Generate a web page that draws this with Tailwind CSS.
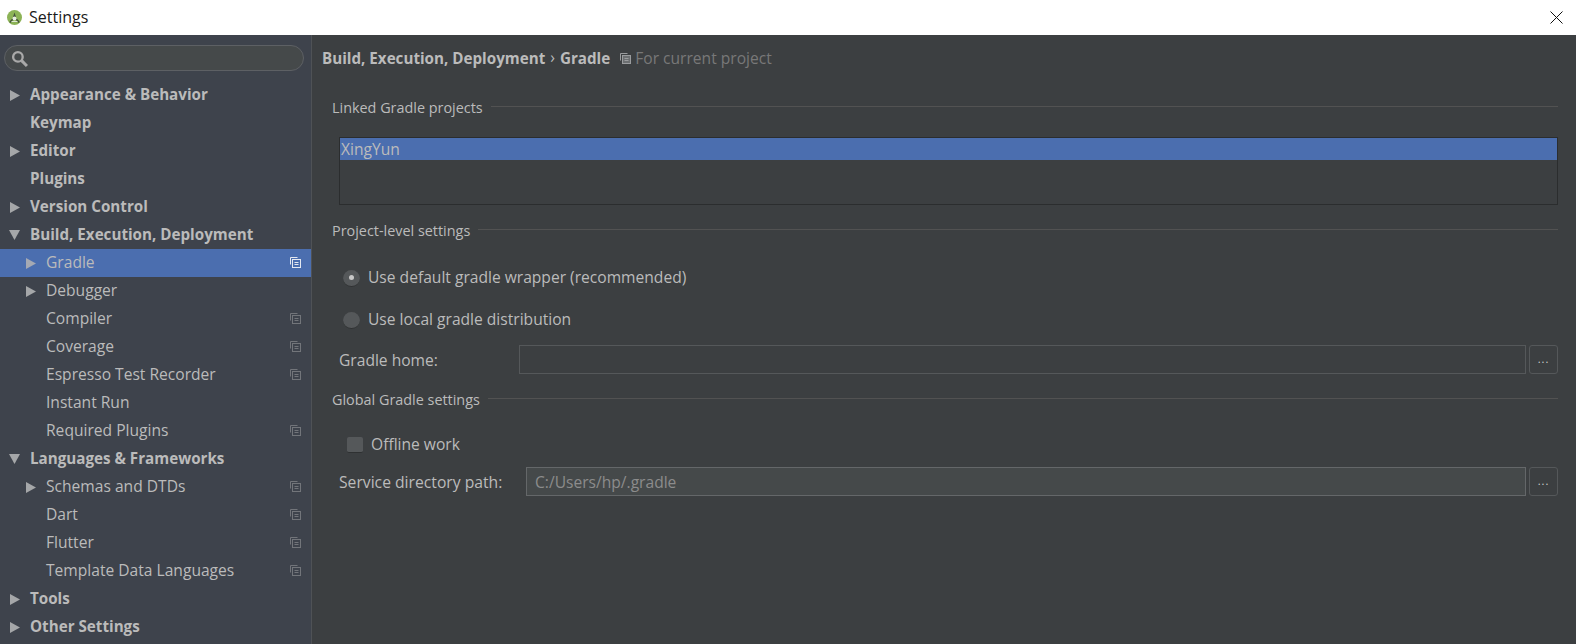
<!DOCTYPE html>
<html lang="en">
<head>
<meta charset="UTF-8">
<title>Settings</title>
<script src="https://cdn.jsdelivr.net/npm/@tailwindcss/browser@4"></script>
</head>
<body class="h-[644px] w-[1576px] overflow-hidden bg-[#3c3f41] font-['Open_Sans','Noto_Sans',sans-serif] text-[15.6px] text-[#bbbbbb]">
<!-- Title bar -->
<header class="flex h-[35px] items-center justify-between bg-white pl-[7px] pr-[13px] text-[#1a1a1a]">
  <div class="flex items-center gap-[7px]">
    <svg width="15" height="15" viewBox="0 0 15 15"><circle cx="7.5" cy="7.5" r="7.5" fill="#8cb356"/><path d="M7.500 2.500 L6 7 H9 Z" fill="#44533a"/><path d="M3 12.500 Q7.500 5 12 12.500" fill="none" stroke="#44533a" stroke-width="1.600"/><circle cx="7.500" cy="8.500" r="2" fill="#e8efe0"/><path d="M4.500 11.500 H10.500" stroke="#dfe8d2"/></svg>
    <span class="-translate-y-px text-[16px]">Settings</span>
  </div>
  <svg width="13" height="13" viewBox="0 0 13 13" stroke="#111" fill="none"><path d="M0.5 0.5 L12.5 12.5 M12.5 0.5 L0.5 12.5"/></svg>
</header>

<div class="flex h-[609px]">
  <!-- Sidebar -->
  <aside class="w-[312px] shrink-0 border-r border-r-[#4f5256] bg-[#3e434c]">
    <div class="px-[4px] pb-[10px] pt-[10px] pr-[7px]">
      <div class="flex h-[26px] items-center rounded-full border border-[#5d6064] bg-[#45494a] pl-[6px]">
        <svg width="17" height="17" viewBox="0 0 16 16" fill="none" stroke="#a9a9a9"><circle cx="6.5" cy="6.5" r="4.5" stroke-width="2.200"/><path d="M10 10 L15 15" stroke-width="2.800"/></svg>
      </div>
    </div>
    <nav id="tree">
      <div class="flex h-[28px] items-center pl-[10px]"><svg class="mr-[10px]" width="10" height="11" viewBox="0 0 10 11"><path d="M0 0 L10 5.500 L0 11 Z" fill="#a5a7a9"/></svg><span class="-translate-y-px text-[15.2px] font-bold">Appearance &amp; Behavior</span></div>
      <div class="flex h-[28px] items-center pl-[30px]"><span class="-translate-y-px text-[15.2px] font-bold">Keymap</span></div>
      <div class="flex h-[28px] items-center pl-[10px]"><svg class="mr-[10px]" width="10" height="11" viewBox="0 0 10 11"><path d="M0 0 L10 5.500 L0 11 Z" fill="#a5a7a9"/></svg><span class="-translate-y-px text-[15.2px] font-bold">Editor</span></div>
      <div class="flex h-[28px] items-center pl-[30px]"><span class="-translate-y-px text-[15.2px] font-bold">Plugins</span></div>
      <div class="flex h-[28px] items-center pl-[10px]"><svg class="mr-[10px]" width="10" height="11" viewBox="0 0 10 11"><path d="M0 0 L10 5.500 L0 11 Z" fill="#a5a7a9"/></svg><span class="-translate-y-px text-[15.2px] font-bold">Version Control</span></div>
      <div class="flex h-[28px] items-center pl-[9px]"><svg class="mr-[10px]" width="11" height="10" viewBox="0 0 11 10"><path d="M0 0 L11 0 L5.500 10 Z" fill="#a5a7a9"/></svg><span class="-translate-y-px text-[15.2px] font-bold">Build, Execution, Deployment</span></div>
      <div class="flex h-[28px] items-center bg-[#4b6eaf] pl-[26px] pr-[10px]"><svg class="mr-[10px]" width="10" height="11" viewBox="0 0 10 11"><path d="M0 0 L10 5.500 L0 11 Z" fill="#a5a9b3"/></svg><span>Gradle</span><svg class="ml-auto -translate-y-px" width="11" height="11" viewBox="0 0 11 11" fill="none" stroke="#e4e8f0"><path d="M7.500 0.500 H0.500 V7.500"/><rect x="2.500" y="2.500" width="8" height="8"/><path d="M4.500 5.500 H8.500 M4.500 7.500 H8.500"/></svg></div>
      <div class="flex h-[28px] items-center pl-[26px]"><svg class="mr-[10px]" width="10" height="11" viewBox="0 0 10 11"><path d="M0 0 L10 5.500 L0 11 Z" fill="#a5a7a9"/></svg><span>Debugger</span></div>
      <div class="flex h-[28px] items-center pl-[46px] pr-[10px]"><span>Compiler</span><svg class="ml-auto -translate-y-px" width="11" height="11" viewBox="0 0 11 11" fill="none" stroke="#72757a"><path d="M7.500 0.500 H0.500 V7.500"/><rect x="2.500" y="2.500" width="8" height="8"/><path d="M4.500 5.500 H8.500 M4.500 7.500 H8.500"/></svg></div>
      <div class="flex h-[28px] items-center pl-[46px] pr-[10px]"><span>Coverage</span><svg class="ml-auto -translate-y-px" width="11" height="11" viewBox="0 0 11 11" fill="none" stroke="#72757a"><path d="M7.500 0.500 H0.500 V7.500"/><rect x="2.500" y="2.500" width="8" height="8"/><path d="M4.500 5.500 H8.500 M4.500 7.500 H8.500"/></svg></div>
      <div class="flex h-[28px] items-center pl-[46px] pr-[10px]"><span>Espresso Test Recorder</span><svg class="ml-auto -translate-y-px" width="11" height="11" viewBox="0 0 11 11" fill="none" stroke="#72757a"><path d="M7.500 0.500 H0.500 V7.500"/><rect x="2.500" y="2.500" width="8" height="8"/><path d="M4.500 5.500 H8.500 M4.500 7.500 H8.500"/></svg></div>
      <div class="flex h-[28px] items-center pl-[46px] pr-[10px]"><span>Instant Run</span></div>
      <div class="flex h-[28px] items-center pl-[46px] pr-[10px]"><span>Required Plugins</span><svg class="ml-auto -translate-y-px" width="11" height="11" viewBox="0 0 11 11" fill="none" stroke="#72757a"><path d="M7.500 0.500 H0.500 V7.500"/><rect x="2.500" y="2.500" width="8" height="8"/><path d="M4.500 5.500 H8.500 M4.500 7.500 H8.500"/></svg></div>
      <div class="flex h-[28px] items-center pl-[9px]"><svg class="mr-[10px]" width="11" height="10" viewBox="0 0 11 10"><path d="M0 0 L11 0 L5.500 10 Z" fill="#a5a7a9"/></svg><span class="-translate-y-px text-[15.2px] font-bold">Languages &amp; Frameworks</span></div>
      <div class="flex h-[28px] items-center pl-[26px] pr-[10px]"><svg class="mr-[10px]" width="10" height="11" viewBox="0 0 10 11"><path d="M0 0 L10 5.500 L0 11 Z" fill="#a5a7a9"/></svg><span>Schemas and DTDs</span><svg class="ml-auto -translate-y-px" width="11" height="11" viewBox="0 0 11 11" fill="none" stroke="#72757a"><path d="M7.500 0.500 H0.500 V7.500"/><rect x="2.500" y="2.500" width="8" height="8"/><path d="M4.500 5.500 H8.500 M4.500 7.500 H8.500"/></svg></div>
      <div class="flex h-[28px] items-center pl-[46px] pr-[10px]"><span>Dart</span><svg class="ml-auto -translate-y-px" width="11" height="11" viewBox="0 0 11 11" fill="none" stroke="#72757a"><path d="M7.500 0.500 H0.500 V7.500"/><rect x="2.500" y="2.500" width="8" height="8"/><path d="M4.500 5.500 H8.500 M4.500 7.500 H8.500"/></svg></div>
      <div class="flex h-[28px] items-center pl-[46px] pr-[10px]"><span>Flutter</span><svg class="ml-auto -translate-y-px" width="11" height="11" viewBox="0 0 11 11" fill="none" stroke="#72757a"><path d="M7.500 0.500 H0.500 V7.500"/><rect x="2.500" y="2.500" width="8" height="8"/><path d="M4.500 5.500 H8.500 M4.500 7.500 H8.500"/></svg></div>
      <div class="flex h-[28px] items-center pl-[46px] pr-[10px]"><span>Template Data Languages</span><svg class="ml-auto -translate-y-px" width="11" height="11" viewBox="0 0 11 11" fill="none" stroke="#72757a"><path d="M7.500 0.500 H0.500 V7.500"/><rect x="2.500" y="2.500" width="8" height="8"/><path d="M4.500 5.500 H8.500 M4.500 7.500 H8.500"/></svg></div>
      <div class="flex h-[28px] items-center pl-[10px]"><svg class="mr-[10px]" width="10" height="11" viewBox="0 0 10 11"><path d="M0 0 L10 5.500 L0 11 Z" fill="#a5a7a9"/></svg><span class="-translate-y-px text-[15.2px] font-bold">Tools</span></div>
      <div class="flex h-[28px] items-center pl-[10px]"><svg class="mr-[10px]" width="10" height="11" viewBox="0 0 10 11"><path d="M0 0 L10 5.500 L0 11 Z" fill="#a5a7a9"/></svg><span class="-translate-y-px text-[15.2px] font-bold">Other Settings</span></div>
    </nav>
  </aside>

  <!-- Main panel -->
  <main class="flex-1 pl-[10px] pr-[18px]">
    <div class="flex h-[48px] items-center">
      <span class="-translate-y-px text-[15.2px] font-bold">Build, Execution, Deployment</span>
      <span class="mx-[5px] -translate-y-px">›</span>
      <span class="-translate-y-px text-[15.2px] font-bold">Gradle</span>
      <svg class="ml-[10px] mr-[4px] -translate-y-px" width="11" height="11" viewBox="0 0 11 11" fill="none" stroke="#9a9c9e"><path d="M7.500 0.500 H0.500 V7.500"/><rect x="2.500" y="2.500" width="8" height="8" fill="#6c6f71"/><path d="M4.500 5.500 H8.500 M4.500 7.500 H8.500"/></svg>
      <span class="text-[#787878]">For current project</span>
    </div>

    <!-- Linked Gradle projects -->
    <div class="ml-[10px] mt-[12px] flex h-[24px] items-center gap-[8px]">
      <span class="translate-y-px text-[14.4px]">Linked Gradle projects</span>
      <div class="h-px flex-1 -translate-y-px bg-[#525252]"></div>
    </div>
    <div class="ml-[17px] mt-[18px] h-[68px] border border-[#2b2d2e]">
      <div class="flex h-[22px] items-center bg-[#4b6eaf] pl-[1px]"><span class="translate-y-px">XingYun</span></div>
    </div>

    <!-- Project-level settings -->
    <div class="ml-[10px] mt-[13px] flex h-[24px] items-center gap-[8px]">
      <span class="translate-y-px text-[14.4px]">Project-level settings</span>
      <div class="h-px flex-1 -translate-y-px bg-[#525252]"></div>
    </div>
    <div class="ml-[21px] mt-[24px] flex h-[24px] items-center gap-[8px]">
      <div class="flex size-[17px] items-center justify-center rounded-full border-b border-b-[#2f3132] bg-[#55585a]"><div class="size-[5px] rounded-full bg-[#c8c8c8]"></div></div>
      <span>Use default gradle wrapper (recommended)</span>
    </div>
    <div class="ml-[21px] mt-[18px] flex h-[24px] items-center gap-[8px]">
      <div class="size-[17px] rounded-full border-b border-b-[#2f3132] bg-[#55585a]"></div>
      <span>Use local gradle distribution</span>
    </div>
    <div class="ml-[17px] mt-[13px] flex h-[29px] items-center">
      <span class="w-[180px] translate-y-px">Gradle home:</span>
      <div class="h-full flex-1 border border-[#55585a]"></div>
      <div class="ml-[3px] flex h-full w-[29px] items-center justify-center rounded-[3px] border border-[#55585a] pb-[2px] text-[11px] leading-none tracking-[1px] text-[#d0d0d0]">...</div>
    </div>

    <!-- Global Gradle settings -->
    <div class="ml-[10px] mt-[13px] flex h-[24px] items-center gap-[8px]">
      <span class="translate-y-px text-[14.4px]">Global Gradle settings</span>
      <div class="h-px flex-1 -translate-y-px bg-[#525252]"></div>
    </div>
    <div class="ml-[25px] mt-[22px] flex h-[24px] items-center gap-[8px]">
      <div class="size-[16px] rounded-[2px] border-b border-b-[#2f3132] bg-[#55585a]"></div>
      <span>Offline work</span>
    </div>
    <div class="ml-[17px] mt-[10px] flex h-[29px] items-center">
      <span class="w-[187px] translate-y-px text-[15.7px]">Service directory path:</span>
      <div class="flex h-full flex-1 items-center border border-[#646769] bg-[#45494a] pl-[8px] text-[#8c8c8c]"><span class="translate-y-px">C:/Users/hp/.gradle</span></div>
      <div class="ml-[3px] flex h-full w-[29px] items-center justify-center rounded-[3px] border border-[#55585a] pb-[2px] text-[11px] leading-none tracking-[1px] text-[#d0d0d0]">...</div>
    </div>
  </main>
</div>
</body>
</html>
